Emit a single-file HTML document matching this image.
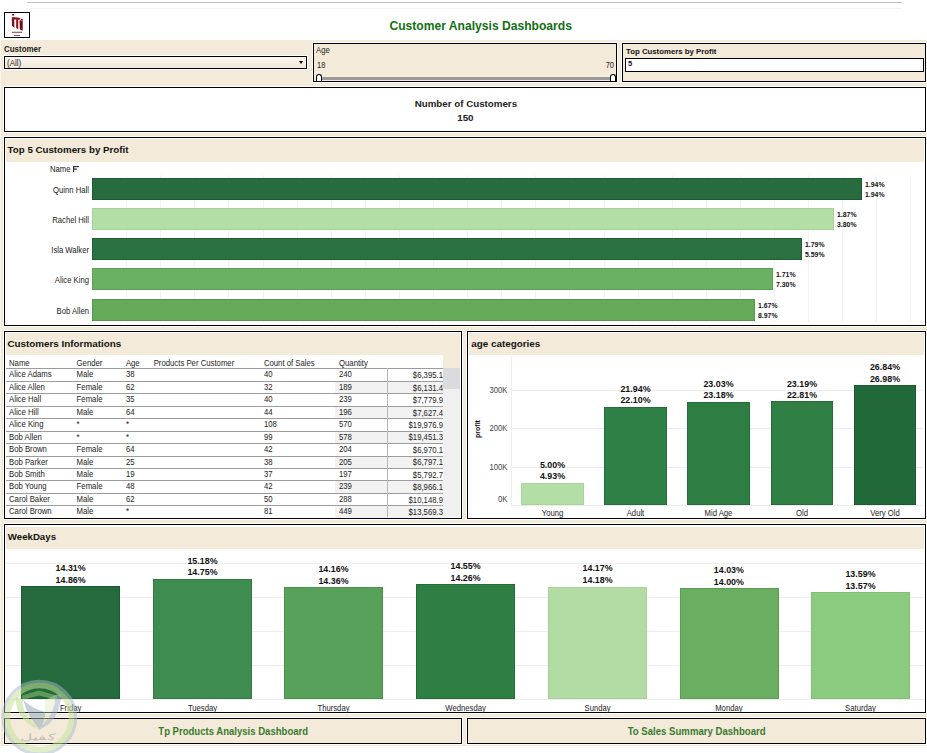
<!DOCTYPE html>
<html><head><meta charset="utf-8"><style>
html,body{margin:0;padding:0;width:927px;height:753px;overflow:hidden;background:#fff;font-family:"Liberation Sans", sans-serif;}
body{position:relative;}
</style></head><body>
<div style="position:absolute;left:0px;top:40px;width:927px;height:706px;background:#F4EAD9;"></div>
<div style="position:absolute;left:0px;top:40px;width:1px;height:706px;background:#faf6ee;"></div>
<div style="position:absolute;left:27px;top:2px;width:875px;height:1px;background:#bdbdbd;"></div>
<div style="position:absolute;left:27px;top:8px;width:875px;height:1px;background:#f3f3f3;"></div>
<div style="position:absolute;left:3px;top:11px;width:26px;height:26px;border:1px solid #fff;box-sizing:content-box;"><div style="position:absolute;left:0;top:0;right:0;bottom:0;border:1px solid #000;background:#fff;"></div></div>
<svg style="position:absolute;left:5px;top:13px" width="24" height="24" viewBox="0 0 24 24">
<rect x="7.2" y="1" width="1.8" height="1.6" fill="#6e0a10"/>
<path d="M6.8 4.2 L9.2 4.6 L9.4 14.6 Q7.6 13.8 7 12.2 Z" fill="#8a0c15"/>
<path d="M7 4.4 Q11 4 15.2 5 L15.2 6.8 Q11 6.2 8 6.6 Z" fill="#8a0c15"/>
<path d="M11.2 6.2 L13.2 6.4 L13.2 16.2 Q11.6 15.6 11.2 14.5 Z" fill="#8a0c15"/>
<rect x="16" y="5.8" width="1.7" height="1.2" fill="#7a0a12"/>
<path d="M14.5 7.4 L17.7 7.2 L17.7 17.7 Q15.2 17.4 14.8 16 Z" fill="#7a0a12"/>
<rect x="7" y="18.7" width="10" height="1.3" fill="#9a3a40" opacity="0.8"/>
<rect x="9" y="22" width="6" height="0.8" fill="#444"/>
</svg>
<div style="position:absolute;left:389.5px;top:20.06px;font-size:12.1px;line-height:12.1px;font-weight:bold;color:#117011;white-space:nowrap;">Customer Analysis Dashboards</div>
<div style="position:absolute;left:4px;top:46.07px;font-size:7.95px;line-height:7.95px;font-weight:bold;color:#1a1a1a;white-space:nowrap;transform:scaleY(1.1);transform-origin:0 6.73px;">Customer</div>
<div style="position:absolute;left:3px;top:55px;width:305px;height:15px;border:1px solid #fff;box-sizing:border-box;"></div>
<div style="position:absolute;left:4px;top:56px;width:303px;height:13px;border:1px solid #000;box-sizing:border-box;background:linear-gradient(#fbf6ee,#f1e8d9);"></div>
<div style="position:absolute;left:7px;top:59.73px;font-size:8.0px;line-height:8.0px;font-weight:normal;color:#222;white-space:nowrap;transform:scaleY(1.1);transform-origin:0 6.77px;">(All)</div>
<div style="position:absolute;left:299px;top:61px;width:0;height:0;border-left:2.5px solid transparent;border-right:2.5px solid transparent;border-top:3px solid #000;"></div>
<div style="position:absolute;left:312px;top:42px;width:304px;height:39px;border:1px solid #fff;box-sizing:content-box;"><div style="position:absolute;left:0;top:0;right:0;bottom:0;border:1px solid #000;background:#F4EAD9;"></div></div>
<div style="position:absolute;left:316px;top:46.94px;font-size:7.75px;line-height:7.75px;font-weight:normal;color:#222;white-space:nowrap;transform:scaleY(1.2);transform-origin:0 6.56px;">Age</div>
<div style="position:absolute;left:317px;top:62.15px;font-size:7.5px;line-height:7.5px;font-weight:normal;color:#222;white-space:nowrap;transform:scaleY(1.2);transform-origin:0 6.35px;">18</div>
<div style="position:absolute;right:313px;top:62.15px;font-size:7.5px;line-height:7.5px;font-weight:normal;color:#222;white-space:nowrap;transform:scaleY(1.2);transform-origin:100% 6.35px;">70</div>
<div style="position:absolute;left:322px;top:77px;width:289px;height:3px;background:#9a9a9a;"></div>
<div style="position:absolute;left:316px;top:74px;width:6px;height:7px;background:#fff;border:1px solid #000;border-bottom:none;border-radius:3px 3px 0 0;box-sizing:border-box;"></div>
<div style="position:absolute;left:610px;top:74px;width:6px;height:7px;background:#fff;border:1px solid #000;border-bottom:none;border-radius:3px 3px 0 0;box-sizing:border-box;"></div>
<div style="position:absolute;left:621px;top:42px;width:304px;height:39px;border:1px solid #fff;box-sizing:content-box;"><div style="position:absolute;left:0;top:0;right:0;bottom:0;border:1px solid #000;background:#F4EAD9;"></div></div>
<div style="position:absolute;left:626px;top:47.90px;font-size:7.8px;line-height:7.8px;font-weight:bold;color:#111;white-space:nowrap;">Top Customers by Profit</div>
<div style="position:absolute;left:625px;top:58px;width:299px;height:14px;border:1px solid #000;box-sizing:border-box;background:#fff;"></div>
<div style="position:absolute;left:628px;top:60.45px;font-size:7.5px;line-height:7.5px;font-weight:bold;color:#111;white-space:nowrap;">5</div>
<div style="position:absolute;left:3px;top:86px;width:922px;height:45px;border:1px solid #fff;box-sizing:content-box;"><div style="position:absolute;left:0;top:0;right:0;bottom:0;border:1px solid #000;background:#fff;"></div></div>
<div style="position:absolute;left:165.89999999999998px;width:600px;text-align:center;top:99.05px;font-size:9.75px;line-height:9.75px;font-weight:bold;color:#222;white-space:nowrap;">Number of Customers</div>
<div style="position:absolute;left:165.39999999999998px;width:600px;text-align:center;top:113.10px;font-size:9.8px;line-height:9.8px;font-weight:bold;color:#222;white-space:nowrap;">150</div>
<div style="position:absolute;left:3px;top:136px;width:922px;height:189px;border:1px solid #fff;box-sizing:content-box;"><div style="position:absolute;left:0;top:0;right:0;bottom:0;border:1px solid #000;background:#fff;"></div></div>
<div style="position:absolute;left:6px;top:139px;width:918px;height:23px;background:#F4EAD9;"></div>
<div style="position:absolute;left:7.6px;top:145.07px;font-size:9.72px;line-height:9.72px;font-weight:bold;color:#111;white-space:nowrap;">Top 5 Customers by Profit</div>
<div style="position:absolute;left:126px;top:175px;width:1px;height:148px;background:#f3f3f3;"></div>
<div style="position:absolute;left:160px;top:175px;width:1px;height:148px;background:#f3f3f3;"></div>
<div style="position:absolute;left:194px;top:175px;width:1px;height:148px;background:#f3f3f3;"></div>
<div style="position:absolute;left:228px;top:175px;width:1px;height:148px;background:#f3f3f3;"></div>
<div style="position:absolute;left:263px;top:175px;width:1px;height:148px;background:#f3f3f3;"></div>
<div style="position:absolute;left:297px;top:175px;width:1px;height:148px;background:#f3f3f3;"></div>
<div style="position:absolute;left:331px;top:175px;width:1px;height:148px;background:#f3f3f3;"></div>
<div style="position:absolute;left:365px;top:175px;width:1px;height:148px;background:#f3f3f3;"></div>
<div style="position:absolute;left:399px;top:175px;width:1px;height:148px;background:#f3f3f3;"></div>
<div style="position:absolute;left:433px;top:175px;width:1px;height:148px;background:#f3f3f3;"></div>
<div style="position:absolute;left:467px;top:175px;width:1px;height:148px;background:#f3f3f3;"></div>
<div style="position:absolute;left:501px;top:175px;width:1px;height:148px;background:#f3f3f3;"></div>
<div style="position:absolute;left:535px;top:175px;width:1px;height:148px;background:#f3f3f3;"></div>
<div style="position:absolute;left:569px;top:175px;width:1px;height:148px;background:#f3f3f3;"></div>
<div style="position:absolute;left:604px;top:175px;width:1px;height:148px;background:#f3f3f3;"></div>
<div style="position:absolute;left:638px;top:175px;width:1px;height:148px;background:#f3f3f3;"></div>
<div style="position:absolute;left:672px;top:175px;width:1px;height:148px;background:#f3f3f3;"></div>
<div style="position:absolute;left:706px;top:175px;width:1px;height:148px;background:#f3f3f3;"></div>
<div style="position:absolute;left:740px;top:175px;width:1px;height:148px;background:#f3f3f3;"></div>
<div style="position:absolute;left:774px;top:175px;width:1px;height:148px;background:#f3f3f3;"></div>
<div style="position:absolute;left:808px;top:175px;width:1px;height:148px;background:#f3f3f3;"></div>
<div style="position:absolute;left:842px;top:175px;width:1px;height:148px;background:#f3f3f3;"></div>
<div style="position:absolute;left:876px;top:175px;width:1px;height:148px;background:#f3f3f3;"></div>
<div style="position:absolute;left:910px;top:175px;width:1px;height:148px;background:#f3f3f3;"></div>
<div style="position:absolute;left:50px;top:165.78px;font-size:7.7px;line-height:7.7px;font-weight:normal;color:#222;white-space:nowrap;transform:scaleY(1.2);transform-origin:0 6.52px;">Name</div>
<svg style="position:absolute;left:73px;top:166px" width="7" height="7" viewBox="0 0 7 7"><rect x="0" y="0" width="1.2" height="6" fill="#333"/><rect x="0" y="0" width="6" height="1.2" fill="#333"/><rect x="0" y="2.5" width="4" height="1.2" fill="#333"/></svg>
<div style="position:absolute;left:92px;top:178px;width:770px;height:22px;background:#276B3F;border:1px solid #1f5a33;box-sizing:border-box;"></div>
<div style="position:absolute;right:838px;top:186.59px;font-size:7.7px;line-height:7.7px;font-weight:normal;color:#222;white-space:nowrap;transform:scaleY(1.2);transform-origin:100% 6.52px;">Quinn Hall</div>
<div style="position:absolute;left:865px;top:182.26px;font-size:6.9px;line-height:6.9px;font-weight:bold;color:#111;white-space:nowrap;">1.94%</div>
<div style="position:absolute;left:865px;top:191.76px;font-size:6.9px;line-height:6.9px;font-weight:bold;color:#111;white-space:nowrap;">1.94%</div>
<div style="position:absolute;left:92px;top:208px;width:742px;height:22px;background:#B3DEA6;border:1px solid #a6d198;box-sizing:border-box;"></div>
<div style="position:absolute;right:838px;top:216.59px;font-size:7.7px;line-height:7.7px;font-weight:normal;color:#222;white-space:nowrap;transform:scaleY(1.2);transform-origin:100% 6.52px;">Rachel Hill</div>
<div style="position:absolute;left:837px;top:212.26px;font-size:6.9px;line-height:6.9px;font-weight:bold;color:#111;white-space:nowrap;">1.87%</div>
<div style="position:absolute;left:837px;top:221.76px;font-size:6.9px;line-height:6.9px;font-weight:bold;color:#111;white-space:nowrap;">3.80%</div>
<div style="position:absolute;left:92px;top:238px;width:710px;height:22px;background:#2A7240;border:1px solid #215c33;box-sizing:border-box;"></div>
<div style="position:absolute;right:838px;top:246.59px;font-size:7.7px;line-height:7.7px;font-weight:normal;color:#222;white-space:nowrap;transform:scaleY(1.2);transform-origin:100% 6.52px;">Isla Walker</div>
<div style="position:absolute;left:805px;top:242.26px;font-size:6.9px;line-height:6.9px;font-weight:bold;color:#111;white-space:nowrap;">1.79%</div>
<div style="position:absolute;left:805px;top:251.76px;font-size:6.9px;line-height:6.9px;font-weight:bold;color:#111;white-space:nowrap;">5.59%</div>
<div style="position:absolute;left:92px;top:268px;width:681px;height:22px;background:#6AB163;border:1px solid #5ca055;box-sizing:border-box;"></div>
<div style="position:absolute;right:838px;top:276.59px;font-size:7.7px;line-height:7.7px;font-weight:normal;color:#222;white-space:nowrap;transform:scaleY(1.2);transform-origin:100% 6.52px;">Alice King</div>
<div style="position:absolute;left:776px;top:272.26px;font-size:6.9px;line-height:6.9px;font-weight:bold;color:#111;white-space:nowrap;">1.71%</div>
<div style="position:absolute;left:776px;top:281.76px;font-size:6.9px;line-height:6.9px;font-weight:bold;color:#111;white-space:nowrap;">7.30%</div>
<div style="position:absolute;left:92px;top:299px;width:663px;height:22px;background:#64AA58;border:1px solid #57994c;box-sizing:border-box;"></div>
<div style="position:absolute;right:838px;top:307.59px;font-size:7.7px;line-height:7.7px;font-weight:normal;color:#222;white-space:nowrap;transform:scaleY(1.2);transform-origin:100% 6.52px;">Bob Allen</div>
<div style="position:absolute;left:758px;top:303.26px;font-size:6.9px;line-height:6.9px;font-weight:bold;color:#111;white-space:nowrap;">1.67%</div>
<div style="position:absolute;left:758px;top:312.76px;font-size:6.9px;line-height:6.9px;font-weight:bold;color:#111;white-space:nowrap;">8.97%</div>
<div style="position:absolute;left:3px;top:330px;width:458px;height:188px;border:1px solid #fff;box-sizing:content-box;"><div style="position:absolute;left:0;top:0;right:0;bottom:0;border:1px solid #000;background:#fff;"></div></div>
<div style="position:absolute;left:6px;top:333px;width:454px;height:22px;background:#F4EAD9;"></div>
<div style="position:absolute;left:443px;top:355px;width:17px;height:13px;background:#F4EAD9;"></div>
<div style="position:absolute;left:7.4px;top:339.15px;font-size:9.86px;line-height:9.86px;font-weight:bold;color:#111;white-space:nowrap;">Customers Informations</div>
<div style="position:absolute;left:9px;top:360.04px;font-size:7.75px;line-height:7.75px;font-weight:normal;color:#222;white-space:nowrap;transform:scaleY(1.2);transform-origin:0 6.56px;">Name</div>
<div style="position:absolute;left:76.6px;top:360.04px;font-size:7.75px;line-height:7.75px;font-weight:normal;color:#222;white-space:nowrap;transform:scaleY(1.2);transform-origin:0 6.56px;">Gender</div>
<div style="position:absolute;left:125.9px;top:360.04px;font-size:7.75px;line-height:7.75px;font-weight:normal;color:#222;white-space:nowrap;transform:scaleY(1.2);transform-origin:0 6.56px;">Age</div>
<div style="position:absolute;left:153.7px;top:360.04px;font-size:7.75px;line-height:7.75px;font-weight:normal;color:#222;white-space:nowrap;transform:scaleY(1.2);transform-origin:0 6.56px;">Products Per Customer</div>
<div style="position:absolute;left:263.9px;top:360.04px;font-size:7.75px;line-height:7.75px;font-weight:normal;color:#222;white-space:nowrap;transform:scaleY(1.2);transform-origin:0 6.56px;">Count of Sales</div>
<div style="position:absolute;left:339px;top:360.04px;font-size:7.75px;line-height:7.75px;font-weight:normal;color:#222;white-space:nowrap;transform:scaleY(1.2);transform-origin:0 6.56px;">Quantity</div>
<div style="position:absolute;left:443px;top:368px;width:17px;height:149px;background:#f0f0f0;"></div>
<div style="position:absolute;left:443px;top:368px;width:17px;height:21px;background:#dadbdf;"></div>
<div style="position:absolute;left:6px;top:368px;width:437px;height:1px;background:#9c9c9c;"></div>
<div style="position:absolute;left:9px;top:371.44px;font-size:7.75px;line-height:7.75px;font-weight:normal;color:#222;white-space:nowrap;transform:scaleY(1.2);transform-origin:0 6.56px;">Alice Adams</div>
<div style="position:absolute;left:76.6px;top:371.44px;font-size:7.75px;line-height:7.75px;font-weight:normal;color:#222;white-space:nowrap;transform:scaleY(1.2);transform-origin:0 6.56px;">Male</div>
<div style="position:absolute;left:125.9px;top:371.44px;font-size:7.75px;line-height:7.75px;font-weight:normal;color:#222;white-space:nowrap;transform:scaleY(1.2);transform-origin:0 6.56px;">38</div>
<div style="position:absolute;left:263.9px;top:371.44px;font-size:7.75px;line-height:7.75px;font-weight:normal;color:#222;white-space:nowrap;transform:scaleY(1.2);transform-origin:0 6.56px;">40</div>
<div style="position:absolute;left:339px;top:371.44px;font-size:7.75px;line-height:7.75px;font-weight:normal;color:#222;white-space:nowrap;transform:scaleY(1.2);transform-origin:0 6.56px;">240</div>
<div style="position:absolute;right:484px;top:372.24px;font-size:7.75px;line-height:7.75px;font-weight:normal;color:#222;white-space:nowrap;transform:scaleY(1.2);transform-origin:100% 6.56px;">$6,395.1</div>
<div style="position:absolute;left:335px;top:382px;width:108px;height:12px;background:#f2f2f2;"></div>
<div style="position:absolute;left:6px;top:381px;width:437px;height:1px;background:#9c9c9c;"></div>
<div style="position:absolute;left:9px;top:383.89px;font-size:7.75px;line-height:7.75px;font-weight:normal;color:#222;white-space:nowrap;transform:scaleY(1.2);transform-origin:0 6.56px;">Alice Allen</div>
<div style="position:absolute;left:76.6px;top:383.89px;font-size:7.75px;line-height:7.75px;font-weight:normal;color:#222;white-space:nowrap;transform:scaleY(1.2);transform-origin:0 6.56px;">Female</div>
<div style="position:absolute;left:125.9px;top:383.89px;font-size:7.75px;line-height:7.75px;font-weight:normal;color:#222;white-space:nowrap;transform:scaleY(1.2);transform-origin:0 6.56px;">62</div>
<div style="position:absolute;left:263.9px;top:383.89px;font-size:7.75px;line-height:7.75px;font-weight:normal;color:#222;white-space:nowrap;transform:scaleY(1.2);transform-origin:0 6.56px;">32</div>
<div style="position:absolute;left:339px;top:383.89px;font-size:7.75px;line-height:7.75px;font-weight:normal;color:#222;white-space:nowrap;transform:scaleY(1.2);transform-origin:0 6.56px;">189</div>
<div style="position:absolute;right:484px;top:384.69px;font-size:7.75px;line-height:7.75px;font-weight:normal;color:#222;white-space:nowrap;transform:scaleY(1.2);transform-origin:100% 6.56px;">$6,131.4</div>
<div style="position:absolute;left:6px;top:393px;width:437px;height:1px;background:#9c9c9c;"></div>
<div style="position:absolute;left:9px;top:396.34px;font-size:7.75px;line-height:7.75px;font-weight:normal;color:#222;white-space:nowrap;transform:scaleY(1.2);transform-origin:0 6.56px;">Alice Hall</div>
<div style="position:absolute;left:76.6px;top:396.34px;font-size:7.75px;line-height:7.75px;font-weight:normal;color:#222;white-space:nowrap;transform:scaleY(1.2);transform-origin:0 6.56px;">Female</div>
<div style="position:absolute;left:125.9px;top:396.34px;font-size:7.75px;line-height:7.75px;font-weight:normal;color:#222;white-space:nowrap;transform:scaleY(1.2);transform-origin:0 6.56px;">35</div>
<div style="position:absolute;left:263.9px;top:396.34px;font-size:7.75px;line-height:7.75px;font-weight:normal;color:#222;white-space:nowrap;transform:scaleY(1.2);transform-origin:0 6.56px;">40</div>
<div style="position:absolute;left:339px;top:396.34px;font-size:7.75px;line-height:7.75px;font-weight:normal;color:#222;white-space:nowrap;transform:scaleY(1.2);transform-origin:0 6.56px;">239</div>
<div style="position:absolute;right:484px;top:397.14px;font-size:7.75px;line-height:7.75px;font-weight:normal;color:#222;white-space:nowrap;transform:scaleY(1.2);transform-origin:100% 6.56px;">$7,779.9</div>
<div style="position:absolute;left:335px;top:407px;width:108px;height:12px;background:#f2f2f2;"></div>
<div style="position:absolute;left:6px;top:406px;width:437px;height:1px;background:#9c9c9c;"></div>
<div style="position:absolute;left:9px;top:408.79px;font-size:7.75px;line-height:7.75px;font-weight:normal;color:#222;white-space:nowrap;transform:scaleY(1.2);transform-origin:0 6.56px;">Alice Hill</div>
<div style="position:absolute;left:76.6px;top:408.79px;font-size:7.75px;line-height:7.75px;font-weight:normal;color:#222;white-space:nowrap;transform:scaleY(1.2);transform-origin:0 6.56px;">Male</div>
<div style="position:absolute;left:125.9px;top:408.79px;font-size:7.75px;line-height:7.75px;font-weight:normal;color:#222;white-space:nowrap;transform:scaleY(1.2);transform-origin:0 6.56px;">64</div>
<div style="position:absolute;left:263.9px;top:408.79px;font-size:7.75px;line-height:7.75px;font-weight:normal;color:#222;white-space:nowrap;transform:scaleY(1.2);transform-origin:0 6.56px;">44</div>
<div style="position:absolute;left:339px;top:408.79px;font-size:7.75px;line-height:7.75px;font-weight:normal;color:#222;white-space:nowrap;transform:scaleY(1.2);transform-origin:0 6.56px;">196</div>
<div style="position:absolute;right:484px;top:409.59px;font-size:7.75px;line-height:7.75px;font-weight:normal;color:#222;white-space:nowrap;transform:scaleY(1.2);transform-origin:100% 6.56px;">$7,627.4</div>
<div style="position:absolute;left:6px;top:418px;width:437px;height:1px;background:#9c9c9c;"></div>
<div style="position:absolute;left:9px;top:421.24px;font-size:7.75px;line-height:7.75px;font-weight:normal;color:#222;white-space:nowrap;transform:scaleY(1.2);transform-origin:0 6.56px;">Alice King</div>
<div style="position:absolute;left:76.6px;top:421.24px;font-size:7.75px;line-height:7.75px;font-weight:normal;color:#222;white-space:nowrap;transform:scaleY(1.2);transform-origin:0 6.56px;">*</div>
<div style="position:absolute;left:125.9px;top:421.24px;font-size:7.75px;line-height:7.75px;font-weight:normal;color:#222;white-space:nowrap;transform:scaleY(1.2);transform-origin:0 6.56px;">*</div>
<div style="position:absolute;left:263.9px;top:421.24px;font-size:7.75px;line-height:7.75px;font-weight:normal;color:#222;white-space:nowrap;transform:scaleY(1.2);transform-origin:0 6.56px;">108</div>
<div style="position:absolute;left:339px;top:421.24px;font-size:7.75px;line-height:7.75px;font-weight:normal;color:#222;white-space:nowrap;transform:scaleY(1.2);transform-origin:0 6.56px;">570</div>
<div style="position:absolute;right:484px;top:422.04px;font-size:7.75px;line-height:7.75px;font-weight:normal;color:#222;white-space:nowrap;transform:scaleY(1.2);transform-origin:100% 6.56px;">$19,976.9</div>
<div style="position:absolute;left:335px;top:432px;width:108px;height:12px;background:#f2f2f2;"></div>
<div style="position:absolute;left:6px;top:431px;width:437px;height:1px;background:#9c9c9c;"></div>
<div style="position:absolute;left:9px;top:433.69px;font-size:7.75px;line-height:7.75px;font-weight:normal;color:#222;white-space:nowrap;transform:scaleY(1.2);transform-origin:0 6.56px;">Bob Allen</div>
<div style="position:absolute;left:76.6px;top:433.69px;font-size:7.75px;line-height:7.75px;font-weight:normal;color:#222;white-space:nowrap;transform:scaleY(1.2);transform-origin:0 6.56px;">*</div>
<div style="position:absolute;left:125.9px;top:433.69px;font-size:7.75px;line-height:7.75px;font-weight:normal;color:#222;white-space:nowrap;transform:scaleY(1.2);transform-origin:0 6.56px;">*</div>
<div style="position:absolute;left:263.9px;top:433.69px;font-size:7.75px;line-height:7.75px;font-weight:normal;color:#222;white-space:nowrap;transform:scaleY(1.2);transform-origin:0 6.56px;">99</div>
<div style="position:absolute;left:339px;top:433.69px;font-size:7.75px;line-height:7.75px;font-weight:normal;color:#222;white-space:nowrap;transform:scaleY(1.2);transform-origin:0 6.56px;">578</div>
<div style="position:absolute;right:484px;top:434.49px;font-size:7.75px;line-height:7.75px;font-weight:normal;color:#222;white-space:nowrap;transform:scaleY(1.2);transform-origin:100% 6.56px;">$19,451.3</div>
<div style="position:absolute;left:6px;top:443px;width:437px;height:1px;background:#9c9c9c;"></div>
<div style="position:absolute;left:9px;top:446.14px;font-size:7.75px;line-height:7.75px;font-weight:normal;color:#222;white-space:nowrap;transform:scaleY(1.2);transform-origin:0 6.56px;">Bob Brown</div>
<div style="position:absolute;left:76.6px;top:446.14px;font-size:7.75px;line-height:7.75px;font-weight:normal;color:#222;white-space:nowrap;transform:scaleY(1.2);transform-origin:0 6.56px;">Female</div>
<div style="position:absolute;left:125.9px;top:446.14px;font-size:7.75px;line-height:7.75px;font-weight:normal;color:#222;white-space:nowrap;transform:scaleY(1.2);transform-origin:0 6.56px;">64</div>
<div style="position:absolute;left:263.9px;top:446.14px;font-size:7.75px;line-height:7.75px;font-weight:normal;color:#222;white-space:nowrap;transform:scaleY(1.2);transform-origin:0 6.56px;">42</div>
<div style="position:absolute;left:339px;top:446.14px;font-size:7.75px;line-height:7.75px;font-weight:normal;color:#222;white-space:nowrap;transform:scaleY(1.2);transform-origin:0 6.56px;">204</div>
<div style="position:absolute;right:484px;top:446.94px;font-size:7.75px;line-height:7.75px;font-weight:normal;color:#222;white-space:nowrap;transform:scaleY(1.2);transform-origin:100% 6.56px;">$6,970.1</div>
<div style="position:absolute;left:335px;top:457px;width:108px;height:12px;background:#f2f2f2;"></div>
<div style="position:absolute;left:6px;top:456px;width:437px;height:1px;background:#9c9c9c;"></div>
<div style="position:absolute;left:9px;top:458.59px;font-size:7.75px;line-height:7.75px;font-weight:normal;color:#222;white-space:nowrap;transform:scaleY(1.2);transform-origin:0 6.56px;">Bob Parker</div>
<div style="position:absolute;left:76.6px;top:458.59px;font-size:7.75px;line-height:7.75px;font-weight:normal;color:#222;white-space:nowrap;transform:scaleY(1.2);transform-origin:0 6.56px;">Male</div>
<div style="position:absolute;left:125.9px;top:458.59px;font-size:7.75px;line-height:7.75px;font-weight:normal;color:#222;white-space:nowrap;transform:scaleY(1.2);transform-origin:0 6.56px;">25</div>
<div style="position:absolute;left:263.9px;top:458.59px;font-size:7.75px;line-height:7.75px;font-weight:normal;color:#222;white-space:nowrap;transform:scaleY(1.2);transform-origin:0 6.56px;">38</div>
<div style="position:absolute;left:339px;top:458.59px;font-size:7.75px;line-height:7.75px;font-weight:normal;color:#222;white-space:nowrap;transform:scaleY(1.2);transform-origin:0 6.56px;">205</div>
<div style="position:absolute;right:484px;top:459.39px;font-size:7.75px;line-height:7.75px;font-weight:normal;color:#222;white-space:nowrap;transform:scaleY(1.2);transform-origin:100% 6.56px;">$6,797.1</div>
<div style="position:absolute;left:6px;top:468px;width:437px;height:1px;background:#9c9c9c;"></div>
<div style="position:absolute;left:9px;top:471.04px;font-size:7.75px;line-height:7.75px;font-weight:normal;color:#222;white-space:nowrap;transform:scaleY(1.2);transform-origin:0 6.56px;">Bob Smith</div>
<div style="position:absolute;left:76.6px;top:471.04px;font-size:7.75px;line-height:7.75px;font-weight:normal;color:#222;white-space:nowrap;transform:scaleY(1.2);transform-origin:0 6.56px;">Male</div>
<div style="position:absolute;left:125.9px;top:471.04px;font-size:7.75px;line-height:7.75px;font-weight:normal;color:#222;white-space:nowrap;transform:scaleY(1.2);transform-origin:0 6.56px;">19</div>
<div style="position:absolute;left:263.9px;top:471.04px;font-size:7.75px;line-height:7.75px;font-weight:normal;color:#222;white-space:nowrap;transform:scaleY(1.2);transform-origin:0 6.56px;">37</div>
<div style="position:absolute;left:339px;top:471.04px;font-size:7.75px;line-height:7.75px;font-weight:normal;color:#222;white-space:nowrap;transform:scaleY(1.2);transform-origin:0 6.56px;">197</div>
<div style="position:absolute;right:484px;top:471.84px;font-size:7.75px;line-height:7.75px;font-weight:normal;color:#222;white-space:nowrap;transform:scaleY(1.2);transform-origin:100% 6.56px;">$5,792.7</div>
<div style="position:absolute;left:335px;top:481px;width:108px;height:12px;background:#f2f2f2;"></div>
<div style="position:absolute;left:6px;top:480px;width:437px;height:1px;background:#9c9c9c;"></div>
<div style="position:absolute;left:9px;top:483.49px;font-size:7.75px;line-height:7.75px;font-weight:normal;color:#222;white-space:nowrap;transform:scaleY(1.2);transform-origin:0 6.56px;">Bob Young</div>
<div style="position:absolute;left:76.6px;top:483.49px;font-size:7.75px;line-height:7.75px;font-weight:normal;color:#222;white-space:nowrap;transform:scaleY(1.2);transform-origin:0 6.56px;">Female</div>
<div style="position:absolute;left:125.9px;top:483.49px;font-size:7.75px;line-height:7.75px;font-weight:normal;color:#222;white-space:nowrap;transform:scaleY(1.2);transform-origin:0 6.56px;">48</div>
<div style="position:absolute;left:263.9px;top:483.49px;font-size:7.75px;line-height:7.75px;font-weight:normal;color:#222;white-space:nowrap;transform:scaleY(1.2);transform-origin:0 6.56px;">42</div>
<div style="position:absolute;left:339px;top:483.49px;font-size:7.75px;line-height:7.75px;font-weight:normal;color:#222;white-space:nowrap;transform:scaleY(1.2);transform-origin:0 6.56px;">239</div>
<div style="position:absolute;right:484px;top:484.29px;font-size:7.75px;line-height:7.75px;font-weight:normal;color:#222;white-space:nowrap;transform:scaleY(1.2);transform-origin:100% 6.56px;">$8,966.1</div>
<div style="position:absolute;left:6px;top:493px;width:437px;height:1px;background:#9c9c9c;"></div>
<div style="position:absolute;left:9px;top:495.94px;font-size:7.75px;line-height:7.75px;font-weight:normal;color:#222;white-space:nowrap;transform:scaleY(1.2);transform-origin:0 6.56px;">Carol Baker</div>
<div style="position:absolute;left:76.6px;top:495.94px;font-size:7.75px;line-height:7.75px;font-weight:normal;color:#222;white-space:nowrap;transform:scaleY(1.2);transform-origin:0 6.56px;">Male</div>
<div style="position:absolute;left:125.9px;top:495.94px;font-size:7.75px;line-height:7.75px;font-weight:normal;color:#222;white-space:nowrap;transform:scaleY(1.2);transform-origin:0 6.56px;">62</div>
<div style="position:absolute;left:263.9px;top:495.94px;font-size:7.75px;line-height:7.75px;font-weight:normal;color:#222;white-space:nowrap;transform:scaleY(1.2);transform-origin:0 6.56px;">50</div>
<div style="position:absolute;left:339px;top:495.94px;font-size:7.75px;line-height:7.75px;font-weight:normal;color:#222;white-space:nowrap;transform:scaleY(1.2);transform-origin:0 6.56px;">288</div>
<div style="position:absolute;right:484px;top:496.74px;font-size:7.75px;line-height:7.75px;font-weight:normal;color:#222;white-space:nowrap;transform:scaleY(1.2);transform-origin:100% 6.56px;">$10,148.9</div>
<div style="position:absolute;left:335px;top:506px;width:108px;height:12px;background:#f2f2f2;"></div>
<div style="position:absolute;left:6px;top:505px;width:437px;height:1px;background:#9c9c9c;"></div>
<div style="position:absolute;left:9px;top:508.39px;font-size:7.75px;line-height:7.75px;font-weight:normal;color:#222;white-space:nowrap;transform:scaleY(1.2);transform-origin:0 6.56px;">Carol Brown</div>
<div style="position:absolute;left:76.6px;top:508.39px;font-size:7.75px;line-height:7.75px;font-weight:normal;color:#222;white-space:nowrap;transform:scaleY(1.2);transform-origin:0 6.56px;">Male</div>
<div style="position:absolute;left:125.9px;top:508.39px;font-size:7.75px;line-height:7.75px;font-weight:normal;color:#222;white-space:nowrap;transform:scaleY(1.2);transform-origin:0 6.56px;">*</div>
<div style="position:absolute;left:263.9px;top:508.39px;font-size:7.75px;line-height:7.75px;font-weight:normal;color:#222;white-space:nowrap;transform:scaleY(1.2);transform-origin:0 6.56px;">81</div>
<div style="position:absolute;left:339px;top:508.39px;font-size:7.75px;line-height:7.75px;font-weight:normal;color:#222;white-space:nowrap;transform:scaleY(1.2);transform-origin:0 6.56px;">449</div>
<div style="position:absolute;right:484px;top:509.19px;font-size:7.75px;line-height:7.75px;font-weight:normal;color:#222;white-space:nowrap;transform:scaleY(1.2);transform-origin:100% 6.56px;">$13,569.3</div>
<div style="position:absolute;left:387px;top:368px;width:1px;height:149px;background:#b5b5b5;"></div>
<div style="position:absolute;left:466px;top:330px;width:459px;height:188px;border:1px solid #fff;box-sizing:content-box;"><div style="position:absolute;left:0;top:0;right:0;bottom:0;border:1px solid #000;background:#fff;"></div></div>
<div style="position:absolute;left:469px;top:333px;width:455px;height:22px;background:#F4EAD9;"></div>
<div style="position:absolute;left:471.3px;top:339.16px;font-size:9.85px;line-height:9.85px;font-weight:bold;color:#111;white-space:nowrap;">age categories</div>
<div style="position:absolute;left:511px;top:356px;width:1px;height:150px;background:#efefef;"></div>
<div style="position:absolute;left:512px;top:390px;width:411px;height:1px;background:#ececec;"></div>
<div style="position:absolute;left:512px;top:428px;width:411px;height:1px;background:#ececec;"></div>
<div style="position:absolute;left:512px;top:467px;width:411px;height:1px;background:#ececec;"></div>
<div style="position:absolute;left:512px;top:505px;width:411px;height:1px;background:#ececec;"></div>
<div style="position:absolute;right:419.5px;top:386.89px;font-size:7.7px;line-height:7.7px;font-weight:normal;color:#444;white-space:nowrap;transform:scaleY(1.2);transform-origin:100% 6.52px;">300K</div>
<div style="position:absolute;right:419.5px;top:425.39px;font-size:7.7px;line-height:7.7px;font-weight:normal;color:#444;white-space:nowrap;transform:scaleY(1.2);transform-origin:100% 6.52px;">200K</div>
<div style="position:absolute;right:419.5px;top:464.09px;font-size:7.7px;line-height:7.7px;font-weight:normal;color:#444;white-space:nowrap;transform:scaleY(1.2);transform-origin:100% 6.52px;">100K</div>
<div style="position:absolute;right:419.5px;top:496.09px;font-size:7.7px;line-height:7.7px;font-weight:normal;color:#444;white-space:nowrap;transform:scaleY(1.2);transform-origin:100% 6.52px;">0K</div>
<div style="position:absolute;left:448px;top:425px;width:60px;height:8px;line-height:8px;font-size:7px;font-weight:bold;color:#111;text-align:center;transform:rotate(-90deg);transform-origin:30px 4px;left:448px;">profit</div>
<div style="position:absolute;left:521px;top:483px;width:63px;height:22px;background:#B3DEA6;border:1px solid #a8d49b;box-sizing:border-box;"></div>
<div style="position:absolute;left:252.5px;width:600px;text-align:center;top:460.85px;font-size:8.9px;line-height:8.9px;font-weight:bold;color:#111;white-space:nowrap;">5.00%</div>
<div style="position:absolute;left:252.5px;width:600px;text-align:center;top:472.05px;font-size:8.9px;line-height:8.9px;font-weight:bold;color:#111;white-space:nowrap;">4.93%</div>
<div style="position:absolute;left:252.5px;width:600px;text-align:center;top:510.39px;font-size:7.7px;line-height:7.7px;font-weight:normal;color:#222;white-space:nowrap;transform:scaleY(1.2);transform-origin:50% 6.52px;">Young</div>
<div style="position:absolute;left:604px;top:407px;width:63px;height:98px;background:#2F8046;border:1px solid #256d3a;box-sizing:border-box;"></div>
<div style="position:absolute;left:335.5px;width:600px;text-align:center;top:385.25px;font-size:8.9px;line-height:8.9px;font-weight:bold;color:#111;white-space:nowrap;">21.94%</div>
<div style="position:absolute;left:335.5px;width:600px;text-align:center;top:396.45px;font-size:8.9px;line-height:8.9px;font-weight:bold;color:#111;white-space:nowrap;">22.10%</div>
<div style="position:absolute;left:335.5px;width:600px;text-align:center;top:510.39px;font-size:7.7px;line-height:7.7px;font-weight:normal;color:#222;white-space:nowrap;transform:scaleY(1.2);transform-origin:50% 6.52px;">Adult</div>
<div style="position:absolute;left:687px;top:402px;width:63px;height:103px;background:#2E7E44;border:1px solid #246c38;box-sizing:border-box;"></div>
<div style="position:absolute;left:418.5px;width:600px;text-align:center;top:380.25px;font-size:8.9px;line-height:8.9px;font-weight:bold;color:#111;white-space:nowrap;">23.03%</div>
<div style="position:absolute;left:418.5px;width:600px;text-align:center;top:391.45px;font-size:8.9px;line-height:8.9px;font-weight:bold;color:#111;white-space:nowrap;">23.18%</div>
<div style="position:absolute;left:418.5px;width:600px;text-align:center;top:510.39px;font-size:7.7px;line-height:7.7px;font-weight:normal;color:#222;white-space:nowrap;transform:scaleY(1.2);transform-origin:50% 6.52px;">Mid Age</div>
<div style="position:absolute;left:771px;top:401px;width:62px;height:104px;background:#307F45;border:1px solid #256c39;box-sizing:border-box;"></div>
<div style="position:absolute;left:502.0px;width:600px;text-align:center;top:379.65px;font-size:8.9px;line-height:8.9px;font-weight:bold;color:#111;white-space:nowrap;">23.19%</div>
<div style="position:absolute;left:502.0px;width:600px;text-align:center;top:390.85px;font-size:8.9px;line-height:8.9px;font-weight:bold;color:#111;white-space:nowrap;">22.81%</div>
<div style="position:absolute;left:502.0px;width:600px;text-align:center;top:510.39px;font-size:7.7px;line-height:7.7px;font-weight:normal;color:#222;white-space:nowrap;transform:scaleY(1.2);transform-origin:50% 6.52px;">Old</div>
<div style="position:absolute;left:854px;top:385px;width:62px;height:120px;background:#226939;border:1px solid #1a5a2f;box-sizing:border-box;"></div>
<div style="position:absolute;left:585.0px;width:600px;text-align:center;top:363.45px;font-size:8.9px;line-height:8.9px;font-weight:bold;color:#111;white-space:nowrap;">26.84%</div>
<div style="position:absolute;left:585.0px;width:600px;text-align:center;top:374.65px;font-size:8.9px;line-height:8.9px;font-weight:bold;color:#111;white-space:nowrap;">26.98%</div>
<div style="position:absolute;left:585.0px;width:600px;text-align:center;top:510.39px;font-size:7.7px;line-height:7.7px;font-weight:normal;color:#222;white-space:nowrap;transform:scaleY(1.2);transform-origin:50% 6.52px;">Very Old</div>
<div style="position:absolute;left:3px;top:523px;width:922px;height:189px;border:1px solid #fff;box-sizing:content-box;"><div style="position:absolute;left:0;top:0;right:0;bottom:0;border:1px solid #000;background:#fff;"></div></div>
<div style="position:absolute;left:6px;top:527px;width:918px;height:22px;background:#F4EAD9;"></div>
<div style="position:absolute;left:7.8px;top:532.30px;font-size:9.69px;line-height:9.69px;font-weight:bold;color:#111;white-space:nowrap;">WeekDays</div>
<div style="position:absolute;left:6px;top:563px;width:918px;height:1px;background:#ededed;"></div>
<div style="position:absolute;left:6px;top:597px;width:918px;height:1px;background:#ededed;"></div>
<div style="position:absolute;left:6px;top:631px;width:918px;height:1px;background:#ededed;"></div>
<div style="position:absolute;left:6px;top:665px;width:918px;height:1px;background:#ededed;"></div>
<div style="position:absolute;left:6px;top:699px;width:918px;height:1px;background:#ededed;"></div>
<div style="position:absolute;left:21px;top:586px;width:99px;height:113px;background:#246A3D;border:1px solid #1c5a32;box-sizing:border-box;"></div>
<div style="position:absolute;left:-229.4px;width:600px;text-align:center;top:563.85px;font-size:8.9px;line-height:8.9px;font-weight:bold;color:#111;white-space:nowrap;">14.31%</div>
<div style="position:absolute;left:-229.4px;width:600px;text-align:center;top:575.65px;font-size:8.9px;line-height:8.9px;font-weight:bold;color:#111;white-space:nowrap;">14.86%</div>
<div style="position:absolute;left:-229.4px;width:600px;text-align:center;top:704.89px;font-size:7.7px;line-height:7.7px;font-weight:normal;color:#222;white-space:nowrap;transform:scaleY(1.2);transform-origin:50% 6.52px;">Friday</div>
<div style="position:absolute;left:153px;top:579px;width:99px;height:120px;background:#3E8C50;border:1px solid #337a44;box-sizing:border-box;"></div>
<div style="position:absolute;left:-97.5px;width:600px;text-align:center;top:556.65px;font-size:8.9px;line-height:8.9px;font-weight:bold;color:#111;white-space:nowrap;">15.18%</div>
<div style="position:absolute;left:-97.5px;width:600px;text-align:center;top:568.45px;font-size:8.9px;line-height:8.9px;font-weight:bold;color:#111;white-space:nowrap;">14.75%</div>
<div style="position:absolute;left:-97.5px;width:600px;text-align:center;top:704.89px;font-size:7.7px;line-height:7.7px;font-weight:normal;color:#222;white-space:nowrap;transform:scaleY(1.2);transform-origin:50% 6.52px;">Tuesday</div>
<div style="position:absolute;left:284px;top:587px;width:99px;height:112px;background:#58A15A;border:1px solid #4c904e;box-sizing:border-box;"></div>
<div style="position:absolute;left:33.5px;width:600px;text-align:center;top:564.75px;font-size:8.9px;line-height:8.9px;font-weight:bold;color:#111;white-space:nowrap;">14.16%</div>
<div style="position:absolute;left:33.5px;width:600px;text-align:center;top:576.55px;font-size:8.9px;line-height:8.9px;font-weight:bold;color:#111;white-space:nowrap;">14.36%</div>
<div style="position:absolute;left:33.5px;width:600px;text-align:center;top:704.89px;font-size:7.7px;line-height:7.7px;font-weight:normal;color:#222;white-space:nowrap;transform:scaleY(1.2);transform-origin:50% 6.52px;">Thursday</div>
<div style="position:absolute;left:416px;top:584px;width:99px;height:115px;background:#2F7F45;border:1px solid #246b38;box-sizing:border-box;"></div>
<div style="position:absolute;left:165.60000000000002px;width:600px;text-align:center;top:561.95px;font-size:8.9px;line-height:8.9px;font-weight:bold;color:#111;white-space:nowrap;">14.55%</div>
<div style="position:absolute;left:165.60000000000002px;width:600px;text-align:center;top:573.75px;font-size:8.9px;line-height:8.9px;font-weight:bold;color:#111;white-space:nowrap;">14.26%</div>
<div style="position:absolute;left:165.60000000000002px;width:600px;text-align:center;top:704.89px;font-size:7.7px;line-height:7.7px;font-weight:normal;color:#222;white-space:nowrap;transform:scaleY(1.2);transform-origin:50% 6.52px;">Wednesday</div>
<div style="position:absolute;left:548px;top:587px;width:99px;height:112px;background:#B3DCA5;border:1px solid #a8d29a;box-sizing:border-box;"></div>
<div style="position:absolute;left:297.5999999999999px;width:600px;text-align:center;top:564.45px;font-size:8.9px;line-height:8.9px;font-weight:bold;color:#111;white-space:nowrap;">14.17%</div>
<div style="position:absolute;left:297.5999999999999px;width:600px;text-align:center;top:576.25px;font-size:8.9px;line-height:8.9px;font-weight:bold;color:#111;white-space:nowrap;">14.18%</div>
<div style="position:absolute;left:297.5999999999999px;width:600px;text-align:center;top:704.89px;font-size:7.7px;line-height:7.7px;font-weight:normal;color:#222;white-space:nowrap;transform:scaleY(1.2);transform-origin:50% 6.52px;">Sunday</div>
<div style="position:absolute;left:680px;top:588px;width:99px;height:111px;background:#6AAF61;border:1px solid #5a9c52;box-sizing:border-box;"></div>
<div style="position:absolute;left:428.9px;width:600px;text-align:center;top:566.05px;font-size:8.9px;line-height:8.9px;font-weight:bold;color:#111;white-space:nowrap;">14.03%</div>
<div style="position:absolute;left:428.9px;width:600px;text-align:center;top:577.85px;font-size:8.9px;line-height:8.9px;font-weight:bold;color:#111;white-space:nowrap;">14.00%</div>
<div style="position:absolute;left:428.9px;width:600px;text-align:center;top:704.89px;font-size:7.7px;line-height:7.7px;font-weight:normal;color:#222;white-space:nowrap;transform:scaleY(1.2);transform-origin:50% 6.52px;">Monday</div>
<div style="position:absolute;left:811px;top:592px;width:99px;height:107px;background:#8BCB7F;border:1px solid #80bf74;box-sizing:border-box;"></div>
<div style="position:absolute;left:560.5px;width:600px;text-align:center;top:569.85px;font-size:8.9px;line-height:8.9px;font-weight:bold;color:#111;white-space:nowrap;">13.59%</div>
<div style="position:absolute;left:560.5px;width:600px;text-align:center;top:581.65px;font-size:8.9px;line-height:8.9px;font-weight:bold;color:#111;white-space:nowrap;">13.57%</div>
<div style="position:absolute;left:560.5px;width:600px;text-align:center;top:704.89px;font-size:7.7px;line-height:7.7px;font-weight:normal;color:#222;white-space:nowrap;transform:scaleY(1.2);transform-origin:50% 6.52px;">Saturday</div>
<div style="position:absolute;left:3px;top:717px;width:458px;height:26px;border:1px solid #fff;box-sizing:content-box;"><div style="position:absolute;left:0;top:0;right:0;bottom:0;border:1px solid #000;background:#F4EAD9;"></div></div>
<div style="position:absolute;left:466px;top:717px;width:459px;height:26px;border:1px solid #fff;box-sizing:content-box;"><div style="position:absolute;left:0;top:0;right:0;bottom:0;border:1px solid #000;background:#F4EAD9;"></div></div>
<div style="position:absolute;left:158.3px;top:726.61px;font-size:9.56px;line-height:9.56px;font-weight:bold;color:#3A7A30;white-space:nowrap;transform:scaleY(1.08);transform-origin:0 8.09px;">Tp Products Analysis Dashboard</div>
<div style="position:absolute;left:627.7px;top:726.57px;font-size:9.6px;line-height:9.6px;font-weight:bold;color:#3A7A30;white-space:nowrap;transform:scaleY(1.08);transform-origin:0 8.13px;">To Sales Summary Dashboard</div>
<div style="position:absolute;left:0px;top:746px;width:927px;height:7px;background:#fff;"></div>
<svg style="position:absolute;left:0px;top:678px" width="80" height="76" viewBox="0 0 80 76">
<circle cx="39.4" cy="39.6" r="36.3" fill="none" stroke="#a5b7c6" stroke-width="3.2" opacity="0.5"/>
<circle cx="39.4" cy="39.6" r="32" fill="none" stroke="#c6e19b" stroke-width="5.5" opacity="0.55"/>
<path d="M22 17.5 L39 12.5 L57 17.5 L57 22 L39 17.5 L22 22 Z" fill="#a6d277" opacity="0.45"/>
<path d="M15.5 19 Q15.5 42 39 52 L39 49 Q22.5 39 22.5 21 Z" fill="#c6e19b" opacity="0.6"/>
<path d="M45 22 L55.5 17 Q55 38 39 49 Q46 40 45 22 Z" fill="#d6eabb" opacity="0.4"/>
<path d="M61 16 Q61 42 39 52 L39 49 Q55 38 55.5 17 Z" fill="#a5b7c6" opacity="0.55"/>
<path d="M23 22 Q29 41 39 50 Q46 43 45 34 Q33 31 23 22 Z" fill="#98aab8" opacity="0.55"/>
<text x="19.5" y="62" font-size="9" textLength="36" lengthAdjust="spacingAndGlyphs" fill="#9a9a9a" opacity="0.55" font-family="Liberation Sans">كفيل</text>
</svg>
</body></html>
